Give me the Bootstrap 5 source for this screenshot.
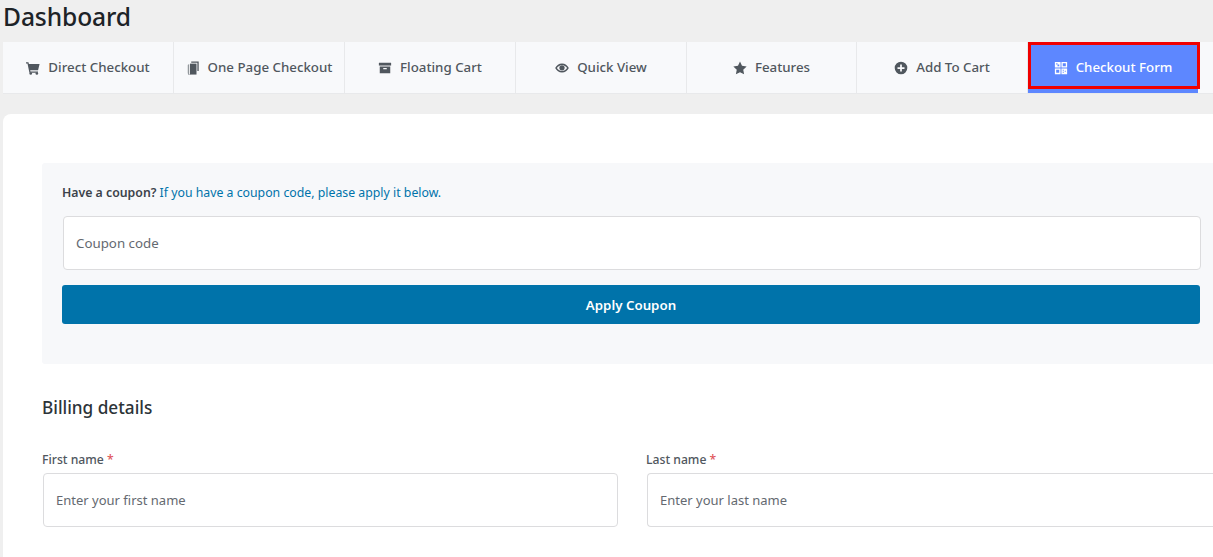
<!doctype html>
<html lang="en">
<head>
<meta charset="utf-8">
<meta name="viewport" content="width=device-width, initial-scale=1">
<title>Dashboard</title>
<link href="https://cdn.jsdelivr.net/npm/bootstrap@5.3.0/dist/css/bootstrap.min.css" rel="stylesheet">
<style>
  html, body { overflow: hidden; }
  body { background: #efefef; font-family: "Noto Sans", "Open Sans", sans-serif; color: #3c434a; height: 557px; }
  .page-title { font-size: 24.6px; font-weight: 500; line-height: 34px; color: #1d2327; margin: 0; padding: 0 0 8px 3px; letter-spacing: -.1px; }
  .tab-bar { margin-left: 3px; height: 52px; background: #f8f9fb; border-bottom: 1px solid #e8e9eb; }
  .tab-item { width: 171px; flex: none; height: 51px; border-right: 1px solid #e8e9eb; color: #50575e; font-size: 13.3px; font-weight: 500; gap: 8px; text-decoration: none; }
  .tab-item:nth-child(5) { width: 170px; }
  .tab-item svg { width: 14px; height: 14px; fill: currentColor; flex: none; }
  .tab-active { position: relative; width: 170px; background: #5d87ff; color: #fff; border-right: 0; }
  .tab-active::after { content: ""; position: absolute; left: 0; top: 0; width: 172px; height: 47px; border: 3px solid #f00000; }
  .main-panel { width: 1210px; height: 443px; margin: 20px 0 0 3px; padding: 49px 0 0 39px; background: #fff; border-radius: 8px 0 0 0; }
  .coupon-box { height: 201px; padding: 20px 13px 0 20px; background: #f7f8fa; border-radius: 3px 0 0 3px; }
  .coupon-note { font-size: 12.3px; line-height: 20px; margin: 0 0 13px; color: #0073aa; }
  .coupon-note strong { color: #3c434a; font-weight: 600; }
  .field-input.form-control { height: 54px; border: 1px solid #dcdcde; border-radius: 4px; padding: 0 12px; font-size: 13px; color: #50575e; background: #fff; box-shadow: none; }
  .field-input.form-control::placeholder { color: #646970; opacity: 1; }
  .coupon-input.form-control { width: 1138px; margin-left: 1px; font-size: 13.3px; }
  .apply-btn.btn { display: block; width: 1138px; height: 39px; margin-top: 15px; padding: 2px 0 0; background: #0073aa; border: 0; border-radius: 3px; color: #fff; font-size: 13.3px; font-weight: 600; }
  .billing-title { font-size: 17.2px; font-weight: 500; line-height: 24px; color: #2c3338; margin: 32px 0 32px; }
  .field-row { gap: 28px; }
  .field-col { flex: 0 0 576px; }
  .field-col-end { flex: 1 1 0; }
  .field-label { display: block; font-size: 12.2px; font-weight: 500; line-height: 16px; margin: 0 0 5px; color: #50575e; }
  .req { color: #e0565a; }
  .field-col .field-input, .field-col-end .field-input { margin-left: 1px; width: calc(100% - 1px); }
  .field-col-end .field-input.form-control { border-right: 0; border-radius: 4px 0 0 4px; }
</style>
</head>
<body>
  <h1 class="page-title">Dashboard</h1>

  <div class="tab-bar d-flex">
    <a href="#" class="tab-item d-flex align-items-center justify-content-center">
      <svg viewBox="0 0 16 16"><path d="M0 1.500h2.800l.5 2H15.500l-1.700 7H4.800l.3 1.400h8.600v1.400H3.900L1.700 2.900H0z"/><circle cx="5.400" cy="14.300" r="1.500"/><circle cx="12.400" cy="14.300" r="1.500"/></svg>
      Direct Checkout
    </a>
    <a href="#" class="tab-item d-flex align-items-center justify-content-center">
      <svg viewBox="0 0 16 16"><path d="M6 .5H14.500V11.500H13V2H6z"/><path d="M4.500 3H12V15.500H4.500z"/><path d="M3.500 3.500V15.500H5V16.500A3 3 0 0 1 2 13.500V4.500z" opacity=".6"/></svg>
      One Page Checkout
    </a>
    <a href="#" class="tab-item d-flex align-items-center justify-content-center">
      <svg viewBox="0 0 16 16"><path d="M1 2h14v3.200H1z"/><path fill-rule="evenodd" d="M2 6.200h12v7.800H2zM6 8v1.300h4V8z"/></svg>
      Floating Cart
    </a>
    <a href="#" class="tab-item d-flex align-items-center justify-content-center">
      <svg viewBox="0 0 16 16"><path fill-rule="evenodd" d="M8 2.800c3.400 0 6.300 2.300 7.800 5.200-1.500 2.900-4.400 5.200-7.800 5.200S1.700 10.900.2 8C1.700 5.100 4.600 2.800 8 2.800zm0 1.700C5.700 4.500 3.600 6 2.200 8c1.400 2 3.500 3.500 5.800 3.500S12.400 10 13.800 8C12.400 6 10.300 4.500 8 4.500z"/><circle cx="8" cy="7.800" r="3"/></svg>
      Quick View
    </a>
    <a href="#" class="tab-item d-flex align-items-center justify-content-center">
      <svg viewBox="0 0 16 16"><path d="M8 .6l2.300 4.900 5.300.7-3.900 3.700 1 5.300L8 12.900l-4.700 2.300 1-5.300L.4 6.200l5.300-.7z"/></svg>
      Features
    </a>
    <a href="#" class="tab-item d-flex align-items-center justify-content-center">
      <svg viewBox="0 0 16 16"><path fill-rule="evenodd" d="M8 .8a7.200 7.200 0 1 1 0 14.400A7.200 7.200 0 0 1 8 .8zM7 4v3H4v2h3v3h2V9h3V7H9V4z"/></svg>
      Add To Cart
    </a>
    <a href="#" class="tab-item tab-active d-flex align-items-center justify-content-center">
      <svg viewBox="0 0 16 16"><path fill-rule="evenodd" d="M1 1h6.500v6.500H1zM2.500 2.500v1.500h1.500V2.500zM4 4v2h2V4zM8.500 1H15v6.500H8.500zM10 2.500v3.500h3.500V2.500zM1 8.500h6.500V15H1zM2.500 10v3.500H6V10zM8.500 8.500H15V15H8.500zM10 10v1.200h1.200V10zM12.300 11.200v1.200h1.200v-1.200zM10 12.400v1.100h1.200v-1.100z"/></svg>
      Checkout Form
    </a>
  </div>

  <div class="main-panel">
    <div class="coupon-box">
      <p class="coupon-note"><strong>Have a coupon?</strong> If you have a coupon code, please apply it below.</p>
      <input type="text" class="form-control field-input coupon-input" placeholder="Coupon code">
      <button type="button" class="btn apply-btn">Apply Coupon</button>
    </div>

    <h2 class="billing-title">Billing details</h2>

    <div class="field-row d-flex">
      <div class="field-col">
        <label class="field-label">First name <span class="req">*</span></label>
        <input type="text" class="form-control field-input" placeholder="Enter your first name">
      </div>
      <div class="field-col-end">
        <label class="field-label">Last name <span class="req">*</span></label>
        <input type="text" class="form-control field-input" placeholder="Enter your last name">
      </div>
    </div>
  </div>

  <script src="https://cdn.jsdelivr.net/npm/bootstrap@5.3.0/dist/js/bootstrap.bundle.min.js"></script>
</body>
</html>
